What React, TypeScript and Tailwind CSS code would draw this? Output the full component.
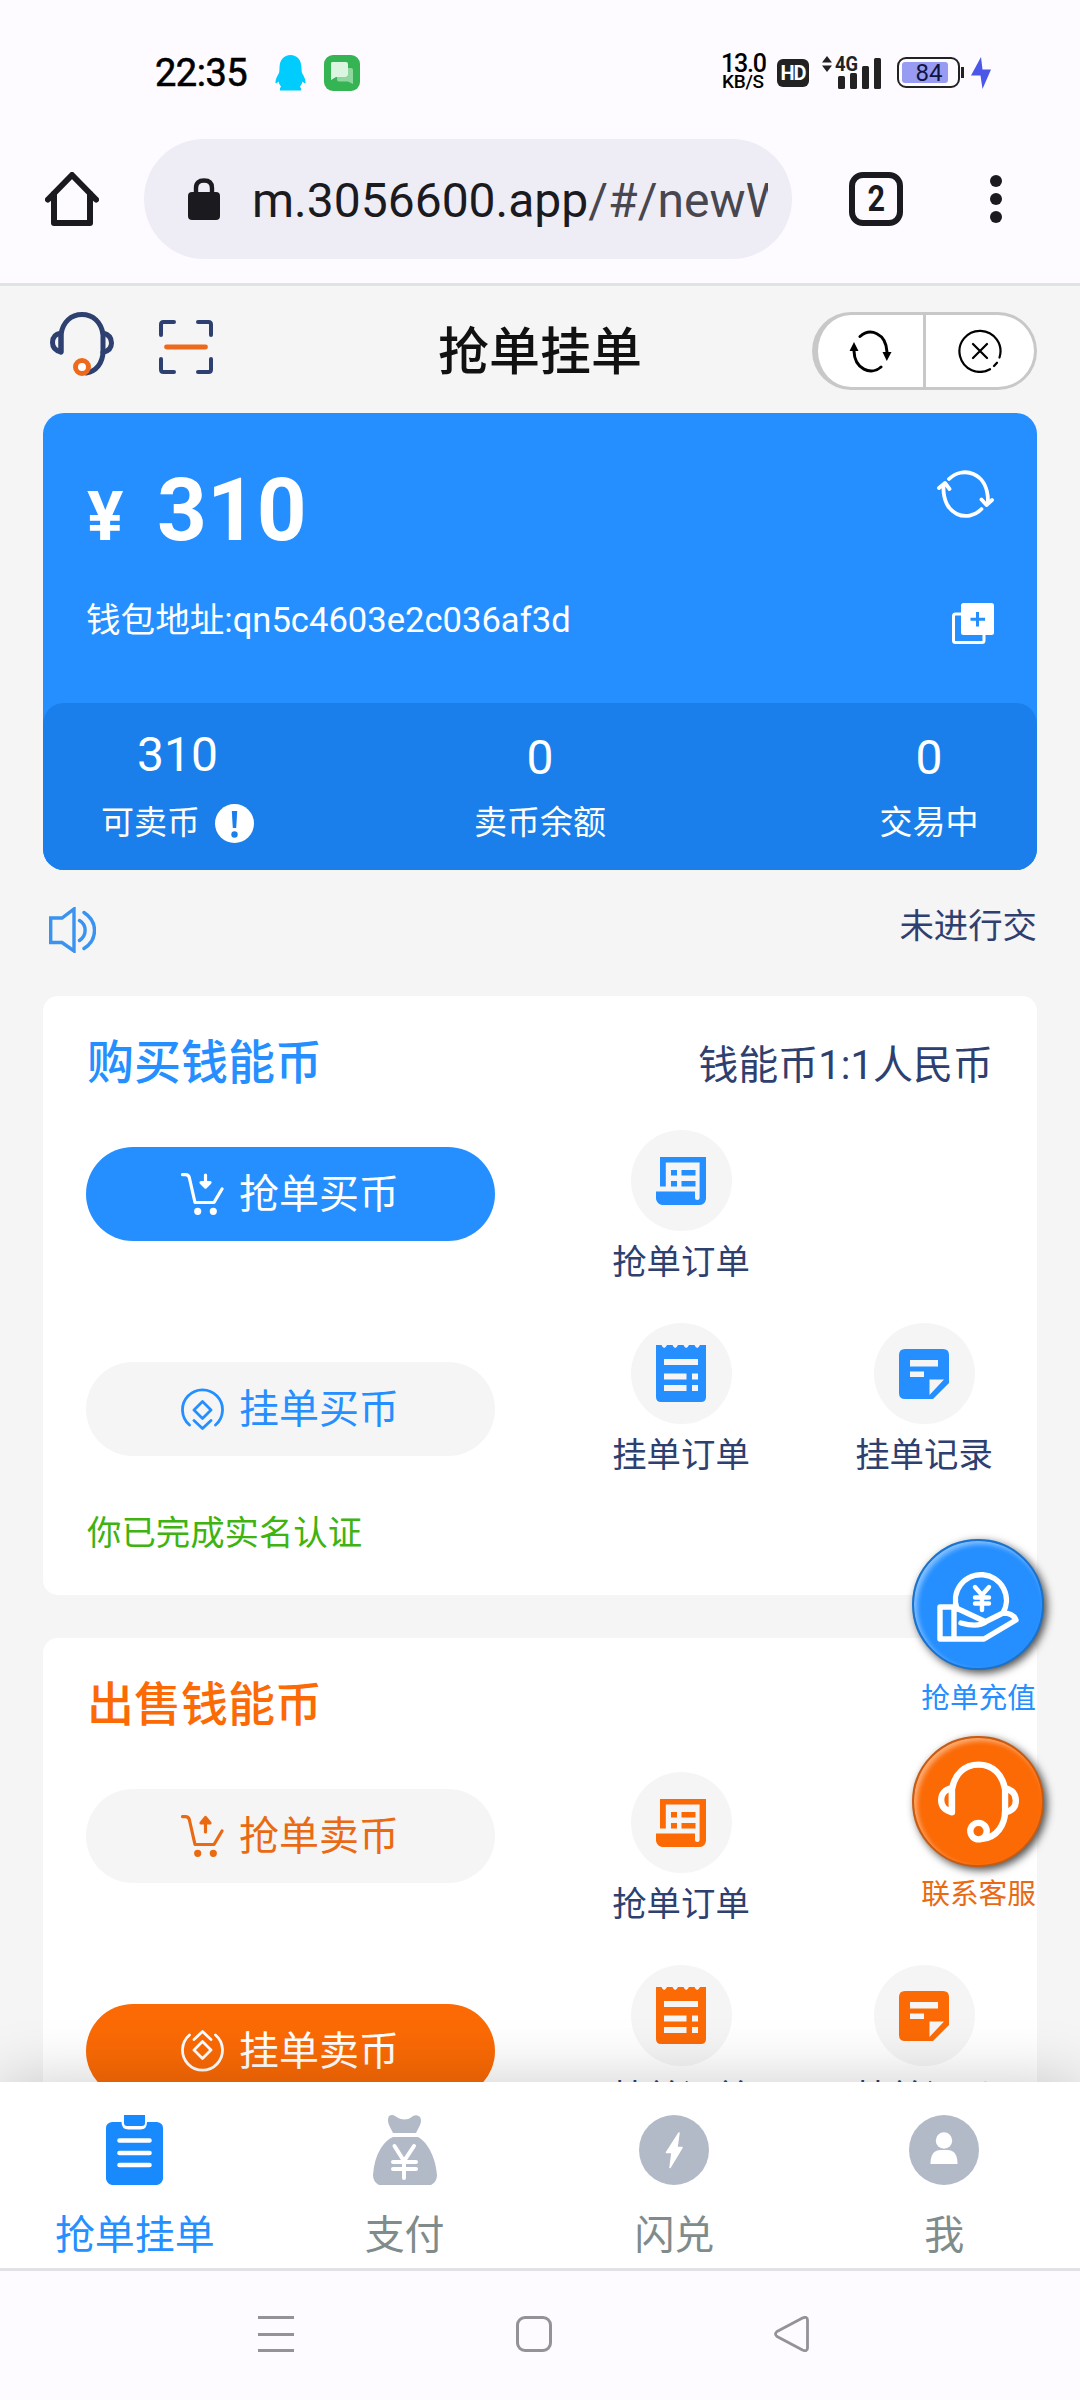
import type { ReactNode } from "react";

type Tone = "blue" | "orange";

const textTone = {
    blue: "text-[#258fff]",
    orange: "text-[#fb6a05]",
};

/* ---------- icons ---------- */

function HeadsetIcon({ className, mic }: { className: string; mic: string }) {
    return (
        <svg className={className} viewBox="0 0 64 64" fill="none" stroke="currentColor" strokeWidth="5" strokeLinecap="round" strokeLinejoin="round">
            <path d="M11 40V22C13 10 21 2.500 32 2.500S51 10 53 22v17C53 51 46 59.500 36 61" />
            <path d="M11 21C5 22 2.500 26 2.500 30.500s2.500 8 8.500 9.500z" />
            <path d="M53 21c6 1.500 8.500 5.500 8.500 10s-2.500 8-8.500 9.500" />
            <circle cx="32" cy="55" r="6.500" className={mic} />
        </svg>
    );
}

function ScanIcon() {
    return (
        <svg className="w-[54px] h-[54px] text-[#2e4070]" viewBox="0 0 54 54" fill="none" stroke="currentColor" strokeWidth="4" strokeLinecap="round">
            <path d="M2 15V4.500Q2 2 4.500 2H15M39 2h10.500Q52 2 52 4.500V15M52 39v10.500q0 2.500-2.500 2.500H39M15 52H4.500Q2 52 2 49.500V39" />
            <path d="M7.500 27h39" stroke="#ed6a1c" strokeWidth="4.800" />
        </svg>
    );
}

function ReloadIcon() {
    return (
        <svg className="w-[43px] h-[43px]" viewBox="0 0 43 43" fill="none" stroke="#000" strokeWidth="3" strokeLinecap="round">
            <path d="M11 6.500C21-2.500 37 3 38 22M32 37C22 46 5.500 39 5 21" />
            <path d="M33.500 22h9L37.800 31zM.500 21h9L5 12z" fill="#000" stroke="none" />
        </svg>
    );
}

function CloseIcon() {
    return (
        <svg className="w-[44px] h-[44px]" viewBox="0 0 44 44" fill="none" stroke="#000" strokeWidth="2.200" strokeLinecap="round">
            <path d="M41.500 28.500A20.500 20.500 0 1 0 32 40.200M36 37l3-3.300M15 15l14 14M29 15L15 29" />
        </svg>
    );
}

function RefreshIcon() {
    return (
        <svg className="w-[57px] h-[48px]" viewBox="0 0 57 48" fill="none" stroke="#fff" strokeWidth="3.800" strokeLinecap="round" strokeLinejoin="round">
            <path d="M12 9C25-4 51 1 51 31.500M44.500 39C31 53 5 46 6.500 15.500" />
            <path d="M44.500 29.500L49.500 35L55 30M2 18l6-5 4.500 6" />
        </svg>
    );
}

function CopyIcon() {
    return (
        <svg className="w-[42px] h-[41px]" viewBox="0 0 42 41" fill="none">
            <path d="M11 11H3.500q-2 0-2 2v24.500q0 2 2 2H30q2 0 2-2V31" stroke="#fff" strokeWidth="3" />
            <rect x="9" width="33" height="32" rx="2.500" fill="#fff" />
            <path d="M25.500 9v14.500M18.500 16.200h14.500" stroke="#258fff" strokeWidth="3" />
        </svg>
    );
}

function InfoIcon() {
    return (
        <svg className="w-[39px] h-[39px]" viewBox="0 0 39 39">
            <circle cx="19.500" cy="19.500" r="19.500" fill="#fff" />
            <path d="M16.800 7h5.400l-1 17h-3.400z" fill="#1a7fea" />
            <circle cx="19.500" cy="30.500" r="3.200" fill="#1a7fea" />
        </svg>
    );
}

function SpeakerIcon() {
    return (
        <svg className="w-[47px] h-[46px]" viewBox="0 0 47 46" fill="none" stroke="#3a93ef" strokeWidth="3.400" strokeLinecap="round">
            <path d="M1.700 11H13L25 2v42L13 35.500H1.700z" />
            <path d="M30.500 13.500c7.500 4.500 7.500 15 0 20M35 5.500c14 9 14 27 0 36" />
        </svg>
    );
}

function CartIcon({ up }: { up?: boolean }) {
    return (
        <svg className="w-[43px] h-[42px]" viewBox="0 0 43 42" fill="none" stroke="currentColor" strokeWidth="3.200" strokeLinecap="round" strokeLinejoin="round">
            <path d="M1.500 1.600h3Q7.500 1.600 8.300 4.500L14 29.500H33L41 16" />
            {up ? <path d="M24.500 17V6M20 8l4.500-5.500L29 8z" /> : <path d="M24.500 2v10M20 9.500l4.500 4.500 4.500-4.500z" />}
            <circle cx="16.700" cy="38.300" r="2" fill="currentColor" />
            <circle cx="32.300" cy="38.300" r="2" fill="currentColor" />
        </svg>
    );
}

function CoinIcon({ up }: { up?: boolean }) {
    return (
        <svg className={up ? "w-[43px] h-[42px] rotate-180" : "w-[43px] h-[42px]"} viewBox="0 0 43 42" fill="none" stroke="currentColor" strokeWidth="2.800" strokeLinecap="round" strokeLinejoin="round">
            <path d="M8.500 37A20 20 0 1 1 34.500 37" />
            <path d="M21.500 13.500L30 22l-8.500 8.500L13 22zM13 32.500l8.500 8 8.500-8" />
        </svg>
    );
}

function ScrollIcon() {
    return (
        <svg className="w-[50px] h-[48px]" viewBox="0 0 50 48" fill="currentColor">
            <path d="M4 0h46v42q-1 6-7 6H6q-5-1-6-6v-7.500h39V41q0 2 2.300 2t2.300-2V5.500H9.800v24H4z" />
            <path d="M15 13h6v5.500h-6zM25.500 13h14v5.500h-14zM15 24h6v5.500h-6zM25.500 24h14v5.500h-14z" />
        </svg>
    );
}

function ReceiptIcon() {
    return (
        <svg className="w-[50px] h-[57px]" viewBox="0 0 50 57">
            <path d="M0 0h5.500q2.500 6 5.500 0h5.500q2.500 6 5.500 0h5.500q2.500 6 5.500 0h5.500q2.500 6 5.500 0H50v52q0 5-5 5H5q-5 0-5-5z" fill="currentColor" />
            <path d="M8 14h34v6H8zM8 28.500h22.500v6H8zM36 28.500h6v6h-6zM8 40h22.500v6H8zM36 40h6v6h-6z" fill="#f5f5f5" />
        </svg>
    );
}

function NoteIcon() {
    return (
        <svg className="w-[50px] h-[50px]" viewBox="0 0 50 50">
            <path d="M6 0h38q6 0 6 6v28L34 50H6q-6 0-6-6V6q0-6 6-6z" fill="currentColor" />
            <path d="M11 11h28v6.500H11zM11 22.500h14V28H11zM30.500 30.500H45L30.500 46z" fill="#f5f5f5" />
        </svg>
    );
}

function HandCoinIcon() {
    return (
        <svg className="w-[82px] h-[75px]" viewBox="0 0 82 75" fill="none" stroke="#fff" strokeWidth="5.400" strokeLinecap="round" strokeLinejoin="round">
            <path d="M20 42A25.500 25.500 0 1 1 66 46" />
            <path d="M3 40h14v32H3zM17 40l30 14M17 72h30L79 53q-3-7-13-7L50 54q-8 7-26 2" />
            <path d="M38 20l7 8 7-8M45 29v14M38 30.500h14M38 36.500h14" strokeWidth="4.400" />
        </svg>
    );
}

function ClipboardIcon() {
    return (
        <svg className="w-[57px] h-[70px]" viewBox="0 0 57 70">
            <path d="M6 7h9.500q0 7.500 7 7.500h12q6.500 0 6.500-7.500h10q6 1 6 6v51q-1 5-6 6H6q-5-1-6-6V13q0-5 6-6z" fill="#188afe" />
            <path d="M18 0h21v8q0 3-3 3H21q-3 0-3-3z" fill="#188afe" />
            <path d="M13.500 25.500h30M13.500 38h30M13.500 50h30" stroke="#fff" strokeWidth="4.600" strokeLinecap="round" />
        </svg>
    );
}

function MoneyBagIcon() {
    return (
        <svg className="w-[64px] h-[70px]" viewBox="0 0 64 70">
            <path d="M16 1q3-2 6 0 10 7 18 0 4-2 7 1 2 3 0 8l-4 8H20l-4-8q-2-5 0-9z" fill="#b2b9c7" />
            <path d="M20 22h25C56 28 63 45 64 60q0 7-6 10H6Q0 67 0 60 1 44 8 33q5-8 12-11z" fill="#b2b9c7" />
            <path d="M21.500 31L31 46l10-15M31 46v17M20 47h23M20 54h23" fill="none" stroke="#fff" strokeWidth="4" strokeLinecap="round" />
        </svg>
    );
}

function FlashIcon() {
    return (
        <svg className="w-[70px] h-[70px]" viewBox="0 0 70 70">
            <circle cx="35" cy="35" r="35" fill="#b2b9c7" />
            <path d="M40 18L27.500 37.500H33L31 52.500 43 32.500H38L40 18z" fill="#fff" stroke="#fff" strokeWidth="1.500" strokeLinejoin="round" />
        </svg>
    );
}

function UserIcon() {
    return (
        <svg className="w-[70px] h-[70px]" viewBox="0 0 70 70">
            <circle cx="35" cy="35" r="35" fill="#b2b9c7" />
            <circle cx="35" cy="25.500" r="8.200" fill="#fff" />
            <path d="M21.500 49q0-14 10-14h7q10 0 10 14z" fill="#fff" />
        </svg>
    );
}

/* ---------- phone and browser chrome ---------- */

function StatusBar() {
    return (
        <div className="flex items-center h-[139px] pl-[155px] pr-[89px] pt-[6px] text-black">
            <div className="w-[120px] text-[38px] tracking-[-0.5px] leading-none [-webkit-text-stroke:0.6px_#000]">22:35</div>
            <svg className="w-[31px] h-[36px]" viewBox="0 0 31 36" fill="#00ccfd">
                <path d="M15.500 0C22 0 26.500 5 26.500 13q0 3 .500 5c2.500 4 4 8 3.500 10q-1 1-3-1.500-.500 3-2.500 5 1.500 2 1 4H5q-.500-2.500 1-4-2-2-2.500-5-2 2.500-3 1.500c-.500-2 1-6 3.500-10q.500-2 .500-5C4.500 5 9 0 15.500 0z" />
            </svg>
            <svg className="ml-[18px] w-[36px] h-[36px]" viewBox="0 0 36 36">
                <rect width="36" height="36" rx="9" fill="#35b454" />
                <path d="M8 7h14q2 0 2 2v11q0 2-2 2H12l-5 3V9q0-2 1-2z" fill="#dcf5e0" />
                <path d="M14 13h13q2 0 2 2v14l-5-2.500H15q-2 0-2-2V22h9q2 0 2-2v-7z" fill="#8fd6a0" />
            </svg>
            <div className="ml-auto w-[46px] font-medium whitespace-nowrap">
                <div className="text-[25px] leading-[19px] tracking-[-1.2px]">13.0</div>
                <div className="pl-px text-[19px] leading-[18px] tracking-[-0.3px]">KB/S</div>
            </div>
            <div className="flex items-center justify-center ml-[10px] w-[32px] h-[28px] rounded-[6px] bg-[#222] text-white text-[20px] font-bold leading-none tracking-[-1px]">HD</div>
            <svg className="ml-[13px] w-[60px] h-[34px]" viewBox="0 0 60 34" fill="#222">
                <path d="M0 6.500L5 0l5 6.500zM0 9.500L5 16l5-6.500z" />
                <text x="13" y="15" fontSize="20" fontWeight="700" textLength="23" lengthAdjust="spacingAndGlyphs">4G</text>
                <rect x="16" y="20" width="7" height="13" rx="1.500" />
                <rect x="28" y="17" width="7" height="16" rx="1.500" />
                <rect x="40" y="10" width="7" height="23" rx="1.500" />
                <rect x="52" y="2" width="7" height="31" rx="1.500" />
            </svg>
            <div className="flex items-center ml-[15px] w-[63px] h-[31px] p-[3px] rounded-[9px] border-2 border-[#222]">
                <div className="flex items-center justify-center w-[46px] h-[21px] rounded-[3px] bg-[#979cf2] text-[24px] text-[#111440] leading-none pl-[8px]">84</div>
            </div>
            <div className="ml-px w-[3px] h-[11px] bg-[#222]"></div>
            <svg className="ml-[7px] w-[20px] h-[32px]" viewBox="0 0 20 32" fill="#4b57e8">
                <path d="M10 0L0 18.500h9.500L11.500 32 20 12.500h-8.500z" />
            </svg>
        </div>
    );
}

function AddressBar() {
    return (
        <div className="flex items-center h-[147px] pb-[24px] pl-[45px] pr-[78px] border-b-[3px] border-[#e0e3e6] text-[#1b1a1f]">
            <svg className="w-[54px] h-[54px]" viewBox="0 0 54 54" fill="none" stroke="currentColor" strokeWidth="6" strokeLinecap="round" strokeLinejoin="round">
                <path d="M3 27.500L27 3l24 24.500" />
                <path d="M9 22v29h36V22" />
            </svg>
            <div className="flex items-center shrink-0 ml-[45px] w-[648px] h-[120px] rounded-full bg-[#eeedf6] pl-[44px] pr-[24px]">
                <svg className="shrink-0 w-[32px] h-[42px]" viewBox="0 0 32 42">
                    <rect y="14" width="32" height="28" rx="4" fill="currentColor" />
                    <path d="M8 16v-6q0-7.500 8-7.500t8 7.500v6" fill="none" stroke="currentColor" strokeWidth="4.400" />
                </svg>
                <div className="flex ml-[32px] pt-[3px] w-[516px] overflow-hidden whitespace-nowrap text-[48px] leading-[60px]">
                    <span>m.3056600.app</span>
                    <span className="text-[#48474f]">/#/newW</span>
                </div>
            </div>
            <div className="flex items-center justify-center ml-[57px] w-[54px] h-[54px] rounded-[14px] border-[6px] border-current text-[36px] font-bold leading-none">
                <span className="scale-x-[0.85]">2</span>
            </div>
            <div className="flex flex-col gap-[6px] ml-auto">
                <div className="w-3 h-3 rounded-full bg-current"></div>
                <div className="w-3 h-3 rounded-full bg-current"></div>
                <div className="w-3 h-3 rounded-full bg-current"></div>
            </div>
        </div>
    );
}

function PageHeader() {
    return (
        <div className="flex shrink-0 h-[127px] pt-[26px]">
            <div className="flex w-[388px] pl-[7px]">
                <HeadsetIcon className="w-[64px] h-[64px] text-[#2e4070]" mic="stroke-[#ed6a1c] fill-white" />
                <div className="ml-[45px] pt-[8px]">
                    <ScanIcon />
                </div>
            </div>
            <div className="w-[218px] pt-[2px] text-center text-[51px] font-medium leading-[78px] text-[#111]">抢单挂单</div>
            <div className="flex ml-auto w-[225px] h-[78px] rounded-full border-[3px] border-l-[6px] border-[#c8c8c8] bg-white">
                <div className="flex items-center w-[108px] pl-[31px] border-r-[3px] border-[#c8c8c8]">
                    <ReloadIcon />
                </div>
                <div className="pl-[32px] pt-[14px]">
                    <CloseIcon />
                </div>
            </div>
        </div>
    );
}

/* ---------- wallet ---------- */

function Stat({ value, label, extra, className }: { value: string; label: string; extra?: ReactNode; className: string }) {
    return (
        <div className={`flex flex-col items-center ${className}`}>
            <div className="text-[48px] leading-[56px]">{value}</div>
            <div className="flex items-center h-[40px] text-[33px] leading-[40px]">
                {label}
                {extra}
            </div>
        </div>
    );
}

function WalletCard() {
    return (
        <div className="shrink-0 h-[457px] rounded-[21px] bg-[#258fff] text-white">
            <div className="h-[290px] pl-[43px] pr-[43px] pt-[53px]">
                <div className="flex justify-between h-[118px]">
                    <div className="flex items-baseline pl-px font-bold leading-[88px]">
                        <span className="w-[70px] text-[68px]">¥</span>
                        <span className="text-[87px]">310</span>
                    </div>
                    <div className="pt-[4px]">
                        <RefreshIcon />
                    </div>
                </div>
                <div className="flex justify-between pt-[14px]">
                    <div className="text-[34.600px] leading-[44px]">钱包地址:qn5c4603e2c036af3d</div>
                    <div className="pt-[5px]">
                        <CopyIcon />
                    </div>
                </div>
            </div>
            <div className="flex h-[167px] rounded-[21px] bg-[#1a7fea] pl-[57px] pr-[58px] pt-[24px]">
                <Stat className="w-[155px] gap-[20px]" value="310" label="可卖币" extra={<span className="ml-[15px]"><InfoIcon /></span>} />
                <Stat className="ml-[219px] w-[132px] pt-[3px] gap-[17px]" value="0" label="卖币余额" />
                <Stat className="ml-auto w-[100px] pt-[3px] gap-[17px]" value="0" label="交易中" />
            </div>
        </div>
    );
}

/* ---------- buy / sell sections ---------- */

function ActionButton({ icon, children, className }: { icon: ReactNode; children: ReactNode; className: string }) {
    return (
        <button className={`flex items-center w-[409px] h-[94px] rounded-full pl-[95px] gap-[15px] text-[40px] leading-none ${className}`}>
            {icon}
            <span className="pt-[2px]">{children}</span>
        </button>
    );
}

function Shortcut({ icon, label, tone }: { icon: ReactNode; label: string; tone: Tone }) {
    return (
        <div className="flex flex-col items-center w-[140px]">
            <div className={`flex items-center justify-center w-[101px] h-[101px] rounded-full bg-[#f5f5f5] ${textTone[tone]}`}>{icon}</div>
            <div className="mt-[9px] text-[34.400px] leading-[44px] text-[#2e4070]">{label}</div>
        </div>
    );
}

function Section({ title, tone, note, grab, hang, footer }: { title: string; tone: Tone; note?: string; grab: ReactNode; hang: ReactNode; footer?: string }) {
    return (
        <div className="shrink-0 h-[599px] rounded-[15px] bg-white px-[43px]">
            <div className="flex justify-between h-[134px]">
                <div className={`pt-[37px] pl-px text-[47px] font-medium leading-[60px] ${textTone[tone]}`}>{title}</div>
                <div className="pt-[40px] pr-px text-[40px] leading-[60px] text-[#2e4070]">{note}</div>
            </div>
            <div className="flex h-[193px]">
                <div className="w-[525px] pt-[17px]">{grab}</div>
                <Shortcut icon={<ScrollIcon />} label="抢单订单" tone={tone} />
            </div>
            <div className="flex h-[185px]">
                <div className="w-[525px] pt-[39px]">{hang}</div>
                <Shortcut icon={<ReceiptIcon />} label="挂单订单" tone={tone} />
                <div className="ml-[103px]">
                    <Shortcut icon={<NoteIcon />} label="挂单记录" tone={tone} />
                </div>
            </div>
            <div className="pl-px text-[34.400px] leading-[51px] text-[#3fb310]">{footer}</div>
        </div>
    );
}

function FloatingActions() {
    return (
        <div className="absolute left-[912px] top-[1253px] w-[132px]">
            <div className="flex items-center justify-center h-[131px] rounded-full border-2 border-[#1b72cb] bg-[#258fff] shadow-[3px_3px_8px_rgba(0,0,0,0.7),inset_3px_3px_5px_rgba(255,255,255,0.45)]">
                <HandCoinIcon />
            </div>
            <div className="mt-[8px] pr-[8px] h-[58px] text-right whitespace-nowrap text-[28.700px] leading-[40px] text-[#258fff]">抢单充值</div>
            <div className="flex items-center justify-center h-[131px] rounded-full border-2 border-[#c65c14] bg-[#fb6a05] shadow-[3px_3px_8px_rgba(0,0,0,0.7),inset_3px_3px_5px_rgba(255,255,255,0.45)]">
                <HeadsetIcon className="w-[81px] h-[84px] text-white" mic="" />
            </div>
            <div className="mt-[7px] pr-[8px] text-right whitespace-nowrap text-[28.700px] leading-[40px] text-[#ea6a14]">联系客服</div>
        </div>
    );
}

/* ---------- bottom ---------- */

const tabs = [
    { label: "抢单挂单", icon: <ClipboardIcon />, active: true },
    { label: "支付", icon: <MoneyBagIcon />, active: false },
    { label: "闪兑", icon: <FlashIcon />, active: false },
    { label: "我", icon: <UserIcon />, active: false },
];

function TabBar() {
    return (
        <div className="relative grid grid-cols-4 h-[186px] pt-[33px] pr-px bg-white shadow-[0_0_60px_rgba(0,0,0,0.2)]">
            {tabs.map((tab) => (
                <div key={tab.label} className="flex flex-col items-center">
                    {tab.icon}
                    <div className={`mt-[21px] text-[40px] leading-[60px] ${tab.active ? "text-[#258fff]" : "text-[#7f8c8b]"}`}>{tab.label}</div>
                </div>
            ))}
        </div>
    );
}

function SystemNav() {
    return (
        <div className="relative flex h-[132px] pt-[45px] pl-[258px] border-t-[3px] border-[#e1e1e6] bg-[#fdfbff] text-[#949296]">
            <div className="flex flex-col justify-between w-[36px] h-[36px]">
                <div className="h-[3px] bg-current"></div>
                <div className="h-[3px] bg-current"></div>
                <div className="h-[3px] bg-current"></div>
            </div>
            <div className="ml-[222px] w-[36px] h-[36px] rounded-[9px] border-[3px] border-current"></div>
            <svg className="ml-[222px] w-[36px] h-[36px]" viewBox="0 0 36 36" fill="none" stroke="currentColor" strokeWidth="2.800" strokeLinejoin="round">
                <path d="M3 15.500L28.500 2Q33.500 0 33.500 4v28q0 4-5 2L3 20.500q-3-2.500 0-5z" />
            </svg>
        </div>
    );
}

export default function App() {
    return (
        <div className="flex flex-col w-[1080px] h-[2400px] overflow-hidden bg-[#fdfbff] font-['Roboto','Noto_Sans_CJK_SC',sans-serif]">
            <div className="h-[286px]">
                <StatusBar />
                <AddressBar />
            </div>

            <div className="relative flex flex-col h-[1796px] overflow-hidden bg-[#f5f5f5] px-[43px]">
                <PageHeader />
                <WalletCard />
                <div className="flex justify-between shrink-0 h-[126px] pl-[6px] pt-[37px]">
                    <SpeakerIcon />
                    <div className="pt-px text-[34.400px] leading-[36px] text-[#2e4070]">未进行交</div>
                </div>
                <Section
                    title="购买钱能币"
                    tone="blue"
                    note="钱能币1:1人民币"
                    grab={<ActionButton className="bg-[#258fff] text-white" icon={<CartIcon />}>抢单买币</ActionButton>}
                    hang={<ActionButton className="bg-[#f5f5f5] text-[#258fff]" icon={<CoinIcon />}>挂单买币</ActionButton>}
                    footer="你已完成实名认证"
                />
                <div className="shrink-0 h-[43px]"></div>
                <Section
                    title="出售钱能币"
                    tone="orange"
                    grab={<ActionButton className="bg-[#f5f5f5] text-[#ea6a14]" icon={<CartIcon up />}>抢单卖币</ActionButton>}
                    hang={<ActionButton className="bg-[#fb6a05] text-white" icon={<CoinIcon up />}>挂单卖币</ActionButton>}
                />
                <FloatingActions />
            </div>

            <TabBar />
            <SystemNav />
        </div>
    );
}
